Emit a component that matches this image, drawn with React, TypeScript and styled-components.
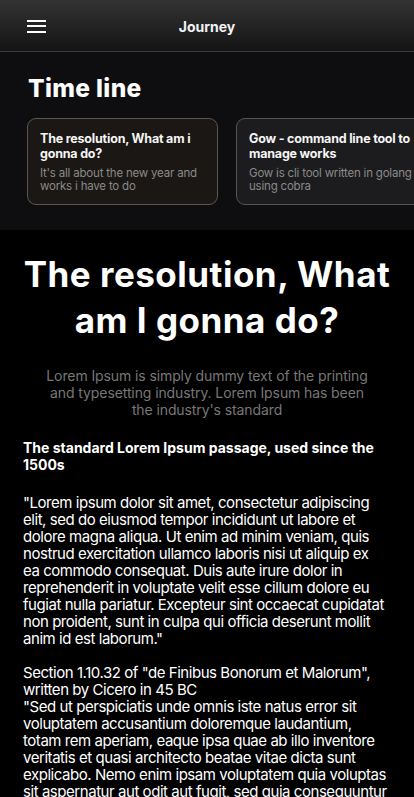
import React from "react";
import styled, { createGlobalStyle } from "styled-components";

const Global = createGlobalStyle`
  html, body { margin: 0; padding: 0; background: #000; }
  body { font-family: Inter, "Noto Sans", sans-serif; color: #fff; -webkit-font-smoothing: antialiased; }
  * { box-sizing: border-box; }
`;

const Page = styled.div`
  width: 414px;
  min-height: 797px;
  background: #000;
  overflow: hidden;
`;

const Header = styled.header`
  height: 52px;
  display: grid;
  grid-template-columns: 1fr auto 1fr;
  align-items: center;
  padding: 0 27px;
  background: linear-gradient(180deg, #333333 0%, #141414 100%);
  border-bottom: 1px solid #3b3b3b;
`;

const Burger = styled.button`
  width: 19px;
  height: 13px;
  margin-top: 1px;
  padding: 0;
  border: 0;
  background: transparent;
  display: flex;
  flex-direction: column;
  justify-content: space-between;
  cursor: pointer;
  span { display: block; height: 2px; background: #fff; }
`;

const HeaderTitle = styled.h1`
  margin: 1px 0 0;
  text-align: center;
  font-size: 14px;
  font-weight: 700;
  color: #f2f2f2;
`;

const TimelineSection = styled.section`
  background: #0e0e10;
  padding: 21px 0 25px 27px;
`;

const SectionTitle = styled.h2`
  margin: 0 0 15px 1px;
  font-size: 24.5px;
  font-weight: 800;
  letter-spacing: 0.35px;
  line-height: 30px;
`;

const CardRow = styled.div`
  display: flex;
  gap: 18px;
  overflow: hidden;
`;

const Card = styled.div<{ $bg: string; $border: string }>`
  flex: 0 0 191px;
  width: 191px;
  height: 87px;
  border: 1px solid ${(p) => p.$border};
  border-radius: 9px;
  background: ${(p) => p.$bg};
  padding: 12px 12px;
`;

const CardTitle = styled.h3`
  margin: 0 0 6px;
  font-size: 12.5px;
  line-height: 15px;
  font-weight: 700;
  letter-spacing: -0.2px;
  color: #f5f5f5;
  white-space: pre;
`;

const CardText = styled.p`
  margin: 0;
  font-size: 11.5px;
  line-height: 13px;
  letter-spacing: -0.2px;
  color: #8a8a8a;
  white-space: pre;
`;

const Article = styled.main`
  background: #000;
  padding: 21px 26px 40px 23px;
`;

const ArticleTitle = styled.h1`
  margin: 0 -3px 0 0;
  text-align: center;
  font-size: 35px;
  line-height: 46px;
  font-weight: 700;
  letter-spacing: 0.5px;
`;

const Lead = styled.p`
  margin: 24px 15px 0 18px;
  text-align: center;
  font-size: 14px;
  line-height: 17px;
  letter-spacing: -0.1px;
  color: #777777;
`;

const Strong = styled.h4`
  margin: 21px 0 21px;
  font-size: 14px;
  line-height: 17px;
  font-weight: 700;
`;

const Body = styled.p`
  margin: 0;
  font-size: 15px;
  line-height: 17px;
  letter-spacing: -0.45px;
  color: #fff;
  white-space: pre-line;
`;

const cards = [
  { title: "The resolution, What am i\ngonna do?", text: "It's all about the new year and\nworks i have to do", bg: "#1a1714", border: "#5b5750" },
  { title: "Gow - command line tool to\nmanage works", text: "Gow is cli tool written in golang\nusing cobra", bg: "#1c1c1e", border: "#555558" },
];

const body = `"Lorem ipsum dolor sit amet, consectetur adipiscing elit, sed do eiusmod tempor incididunt ut labore et dolore magna aliqua. Ut enim ad minim veniam, quis nostrud exercitation ullamco laboris nisi ut aliquip ex ea commodo consequat. Duis aute irure dolor in reprehenderit in voluptate velit esse cillum dolore eu fugiat nulla pariatur. Excepteur sint occaecat cupidatat non proident, sunt in culpa qui officia deserunt mollit anim id est laborum."

Section 1.10.32 of "de Finibus Bonorum et Malorum", written by Cicero in 45 BC
"Sed ut perspiciatis unde omnis iste natus error sit voluptatem accusantium doloremque laudantium, totam rem aperiam, eaque ipsa quae ab illo inventore veritatis et quasi architecto beatae vitae dicta sunt explicabo. Nemo enim ipsam voluptatem quia voluptas sit aspernatur aut odit aut fugit, sed quia consequuntur magni dolores eos qui ratione voluptatem sequi nesciunt."`;

export default function App() {
  return (
    <Page>
      <Global />
      <Header>
        <Burger aria-label="menu">
          <span />
          <span />
          <span />
        </Burger>
        <HeaderTitle>Journey</HeaderTitle>
        <div />
      </Header>
      <TimelineSection>
        <SectionTitle>Time line</SectionTitle>
        <CardRow>
          {cards.map((c) => (
            <Card key={c.title} $bg={c.bg} $border={c.border}>
              <CardTitle>{c.title}</CardTitle>
              <CardText>{c.text}</CardText>
            </Card>
          ))}
        </CardRow>
      </TimelineSection>
      <Article>
        <ArticleTitle>The resolution, What am I gonna do?</ArticleTitle>
        <Lead>
          Lorem Ipsum is simply dummy text of the printing and typesetting industry. Lorem Ipsum has been the
          industry's standard
        </Lead>
        <Strong>The standard Lorem Ipsum passage, used since the 1500s</Strong>
        <Body>{body}</Body>
      </Article>
    </Page>
  );
}
